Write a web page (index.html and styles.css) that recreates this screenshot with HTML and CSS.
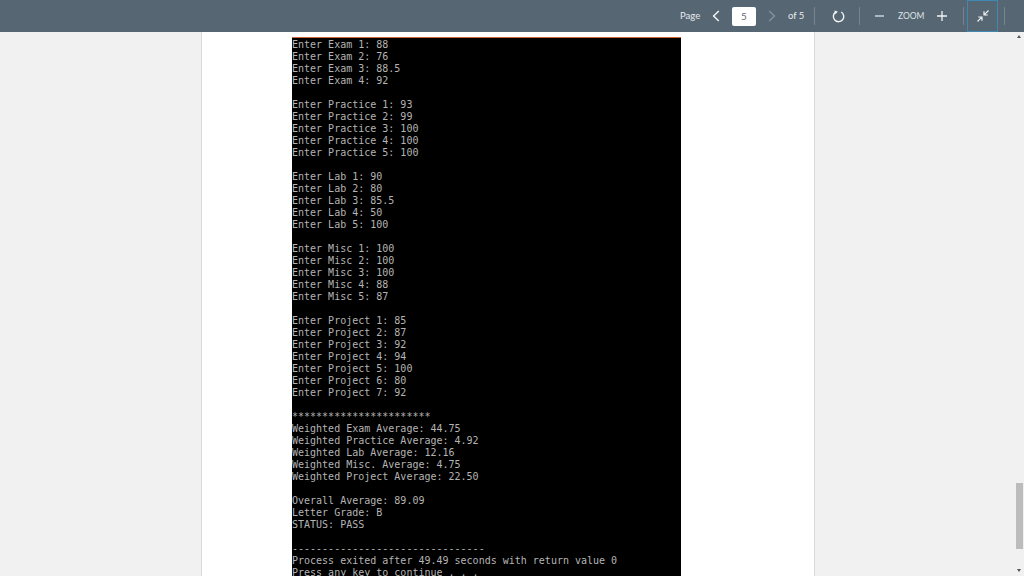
FILE: index.html
```html
<!DOCTYPE html>
<html lang="en">
<head>
<meta charset="utf-8">
<title>Document viewer</title>
<link rel="stylesheet" href="styles.css">
</head>
<body>
<header class="toolbar">
  <span class="label page-label">Page</span>
  <button class="icon nav-prev" aria-label="Previous page"><svg width="8" height="12" viewBox="0 0 8 12"><path d="M6.8 1 1.6 6l5.2 5" fill="none" stroke="#f2f4f5" stroke-width="1.5"/></svg></button>
  <span class="page-input">5</span>
  <button class="icon nav-next" aria-label="Next page"><svg width="8" height="12" viewBox="0 0 8 12"><path d="M1.2 1l5.2 5-5.2 5" fill="none" stroke="#84919b" stroke-width="1.5"/></svg></button>
  <span class="label page-total">of 5</span>
  <span class="divider div-a"></span>
  <button class="icon rotate" aria-label="Rotate"><svg width="13" height="13" viewBox="0 0 13 13"><path d="M3.6 2.2A5.2 5.2 0 1 0 9.2 2" fill="none" stroke="#f2f4f5" stroke-width="1.4"/><path d="M2.4.4 5.8 1.4 3.6 4.2Z" fill="#f2f4f5"/></svg></button>
  <span class="divider div-b"></span>
  <button class="icon minus" aria-label="Zoom out"><svg width="9" height="10" viewBox="0 0 9 10"><path d="M0 5h9" stroke="#dfe4e7" stroke-width="1.3"/></svg></button>
  <span class="zoom-label">ZOOM</span>
  <button class="icon plus" aria-label="Zoom in"><svg width="10" height="10" viewBox="0 0 10 10"><path d="M0 5h10M5 0v10" stroke="#f2f4f5" stroke-width="1.3"/></svg></button>
  <span class="divider div-c"></span>
  <button class="collapse" aria-label="Exit full screen"><svg width="12" height="12" viewBox="0 0 12 12"><path d="M11.5.5 7.2 4.8M7 1.2v3.8h3.8M.5 11.5l4.3-4.3M1.2 7H5v3.8" fill="none" stroke="#eef1f2" stroke-width="1.2"/></svg></button>
  <span class="divider div-d"></span>
</header>
<main class="viewer">
  <section class="sheet">
    <pre class="console">Enter Exam 1: 88
Enter Exam 2: 76
Enter Exam 3: 88.5
Enter Exam 4: 92

Enter Practice 1: 93
Enter Practice 2: 99
Enter Practice 3: 100
Enter Practice 4: 100
Enter Practice 5: 100

Enter Lab 1: 90
Enter Lab 2: 80
Enter Lab 3: 85.5
Enter Lab 4: 50
Enter Lab 5: 100

Enter Misc 1: 100
Enter Misc 2: 100
Enter Misc 3: 100
Enter Misc 4: 88
Enter Misc 5: 87

Enter Project 1: 85
Enter Project 2: 87
Enter Project 3: 92
Enter Project 4: 94
Enter Project 5: 100
Enter Project 6: 80
Enter Project 7: 92

***********************
Weighted Exam Average: 44.75
Weighted Practice Average: 4.92
Weighted Lab Average: 12.16
Weighted Misc. Average: 4.75
Weighted Project Average: 22.50

Overall Average: 89.09
Letter Grade: B
STATUS: PASS

--------------------------------
Process exited after 49.49 seconds with return value 0
Press any key to continue . . .</pre>
  </section>
</main>
<div class="scrollbar">
  <span class="arrow-up"></span>
  <span class="thumb"></span>
  <span class="arrow-down"></span>
</div>
</body>
</html>
```
FILE: styles.css
```css
* { box-sizing: border-box; }
html, body { margin: 0; height: 100%; overflow: hidden; }
body { background: #f1f1f1; display: flex; flex-direction: column; font-family: "Lato", sans-serif; }
.toolbar { height: 32px; flex: none; background: #566673; display: flex; align-items: center; padding-left: 680px; color: #eef1f2; }
.label { font-size: 9.5px; line-height: 12px; color: #e8ecee; }
.page-label { width: 20px; white-space: nowrap; }
.icon { border: 0; padding: 0; background: none; display: flex; align-items: center; justify-content: center; }
.nav-prev { width: 8px; margin-left: 12px; }
.page-input { width: 24px; height: 19px; margin-left: 12px; background: #fff; border-radius: 2px; color: #5f6b75; font-size: 10px; line-height: 18px; text-align: center; }
.nav-next { width: 8px; margin-left: 12px; }
.page-total { width: 16px; margin-left: 12px; white-space: nowrap; }
.divider { width: 1px; height: 18px; background: #76848f; flex: none; }
.div-a { margin-left: 10px; }
.rotate { width: 13px; margin-left: 17px; }
.div-b { margin-left: 14px; }
.minus { width: 9px; margin-left: 15px; }
.zoom-label { width: 26px; margin-left: 14px; font-size: 8.5px; color: #dfe4e7; white-space: nowrap; }
.plus { width: 10px; margin-left: 13px; }
.div-c { margin-left: 16px; }
.collapse { width: 31px; height: 32px; margin-left: 3px; padding: 0; background: none; border: 1px solid #3f88b2; display: flex; align-items: center; justify-content: center; flex: none; }
.div-d { margin-left: 6px; }
.viewer { flex: 1; min-height: 0; display: flex; padding-left: 201px; overflow: hidden; }
.sheet { width: 614px; background: #fff; border-left: 1px solid #d9d9d9; border-right: 1px solid #d9d9d9; padding: 5px 0 0 90px; }
.console { margin: 0; width: 389px; height: 539px; padding-top: 1px; overflow: hidden; background: #000; border-top: 1px solid #c8663a; color: #b4b4b4; font-family: "DejaVu Sans Mono", monospace; font-size: 10px; line-height: 12px; }
.scrollbar { position: fixed; top: 32px; right: 0; bottom: 0; width: 10px; }
.thumb { position: absolute; left: 2px; top: 451px; width: 7px; height: 66px; background: #bcbcbc; }
.arrow-up, .arrow-down { position: absolute; left: 3px; width: 0; height: 0; border-left: 2.5px solid transparent; border-right: 2.5px solid transparent; }
.arrow-up { top: 3px; border-bottom: 3px solid #555; }
.arrow-down { bottom: 4px; border-top: 3px solid #555; }
```
